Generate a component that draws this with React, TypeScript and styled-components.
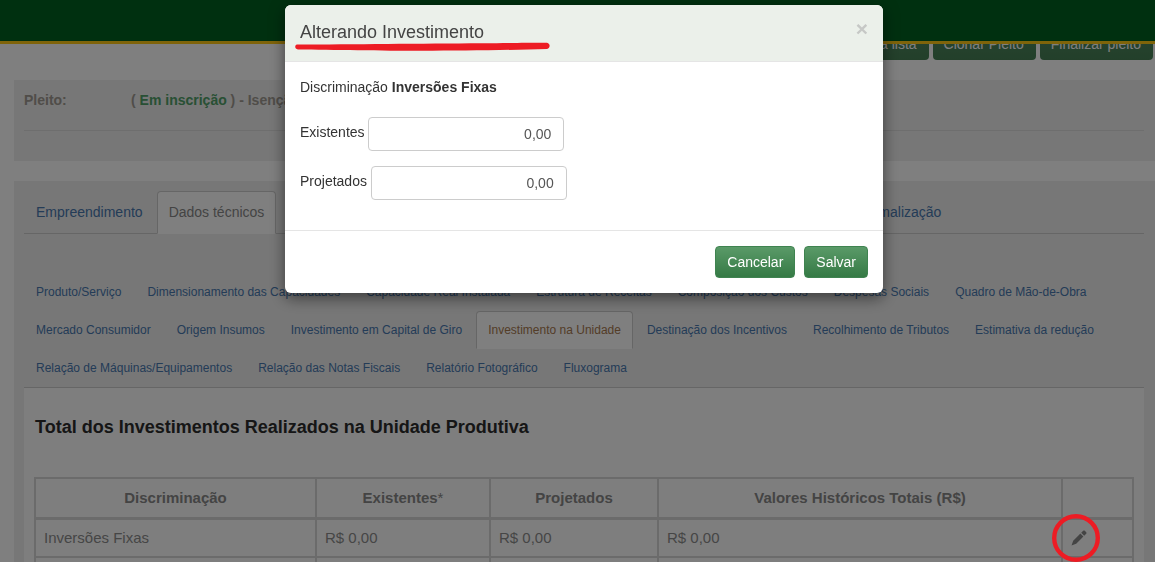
import React from 'react'
import styled, { createGlobalStyle } from 'styled-components'

const GlobalStyle = createGlobalStyle`
  html, body {
    margin: 0;
    height: 100%;
    overflow: hidden;
    background: #fff;
  }
  body {
    font-family: "Liberation Sans", Arial, sans-serif;
    font-size: 14px;
    line-height: 20px;
    color: #999;
  }
  * {
    box-sizing: border-box;
  }
`

const TopBar = styled.header`
  position: fixed;
  top: 0;
  left: 0;
  right: 0;
  height: 44px;
  background: #006020;
  border-bottom: 3px solid #ffc814;
  z-index: 5;
`

const Page = styled.main`
  padding: 26px 0 0 14px;
`

const Toolbar = styled.div`
  display: flex;
  justify-content: flex-end;
  gap: 4px;
  padding-right: 2px;
`

const ToolButton = styled.button`
  height: 34px;
  padding: 2px 12px 0 11px;
  border: 0;
  border-radius: 4px;
  background: linear-gradient(#508a60, #467f55);
  color: #fff;
  font: 14px "Liberation Sans", Arial, sans-serif;
`

const Panel = styled.section<{ $top: number }>`
  margin-top: ${(p) => p.$top}px;
  padding: 10px 11px 10px 10px;
  background: #eee;
`

const PleitoRow = styled.div`
  display: flex;
  font-weight: 700;
  color: #a09a92;
`

const PleitoLabel = styled.span`
  width: 107px;
`

const Status = styled.span`
  color: #50a068;
`

const Rule = styled.hr`
  margin: 20px 0;
  border: 0;
  border-top: 1px solid #ddd;
`

const MainTabs = styled.ul`
  display: flex;
  height: 43px;
  margin: 0;
  padding: 0;
  list-style: none;
  border-bottom: 1px solid #ccc;
`

const MainTab = styled.li<{ $active?: boolean; $left?: number }>`
  height: ${(p) => (p.$active ? 43 : 42)}px;
  margin-right: 2px;
  margin-left: ${(p) => p.$left ?? 0}px;
  padding: 10px 11px;
  border: 1px solid ${(p) => (p.$active ? '#ccc' : 'transparent')};
  border-bottom-color: ${(p) => (p.$active ? '#fff' : 'transparent')};
  border-radius: 4px 4px 0 0;
  background: ${(p) => (p.$active ? '#fff' : 'transparent')};
  color: ${(p) => (p.$active ? '#888' : '#4878ae')};
`

const SubTabs = styled.ul`
  display: flex;
  flex-wrap: wrap;
  margin: 39px 0 0;
  padding: 0;
  list-style: none;
  border-bottom: 1px solid #ccc;
`

const SubTab = styled.li<{ $active?: boolean }>`
  height: 38px;
  margin-right: 2px;
  padding: 8px 11px;
  border: 1px solid ${(p) => (p.$active ? '#ccc' : 'transparent')};
  border-bottom-color: ${(p) => (p.$active ? '#fff' : 'transparent')};
  border-radius: 4px 4px 0 0;
  background: ${(p) => (p.$active ? '#fff' : 'transparent')};
  color: ${(p) => (p.$active ? '#a87a50' : '#4878ae')};
  font-size: 12px;
`

const Content = styled.div`
  padding: 28px 10px 0;
  background: #fdfdfd;
`

const Heading = styled.h4`
  margin: 0 0 39px 1px;
  font-size: 18px;
  line-height: 22px;
  color: #2c2c2c;
`

const InvestTable = styled.table`
  width: 1098px;
  border-collapse: collapse;
  table-layout: fixed;
`

const HeadCell = styled.th`
  height: 40px;
  padding: 0 8px;
  border: 2px solid #d6d6d6;
  border-bottom-width: 3px;
  color: #888;
  font-size: 15px;
`

const Asterisk = styled.span`
  font-weight: 400;
`

const Cell = styled.td`
  height: 39px;
  padding: 1px 8px 0;
  border: 2px solid #d6d6d6;
  color: #8c8c8c;
  font-size: 15px;
`

const EditIcon = styled.svg`
  display: block;
  width: 16px;
  height: 16px;
  fill: #888;
`

const Backdrop = styled.div`
  position: fixed;
  inset: 0;
  background: rgba(0, 0, 0, 0.5);
  z-index: 10;
`

const Modal = styled.div`
  position: fixed;
  top: 5px;
  left: 285px;
  width: 598px;
  height: 288px;
  background: #fff;
  border-radius: 6px;
  box-shadow: 0 5px 15px rgba(0, 0, 0, 0.5);
  color: #333;
  z-index: 20;
`

const ModalHeader = styled.div`
  display: flex;
  justify-content: space-between;
  height: 57px;
  padding: 16px 15px 0;
  background: #ebf0ea;
  border-bottom: 1px solid #e5e5e5;
  border-radius: 6px 6px 0 0;
`

const ModalTitle = styled.h4`
  margin: 0;
  font-size: 18px;
  font-weight: 400;
  line-height: 22px;
  color: #444;
`

const CloseMark = styled.span`
  margin-top: -2px;
  font-size: 21px;
  font-weight: 700;
  color: #c6c8c6;
`

const ModalBody = styled.div`
  display: flex;
  flex-direction: column;
  gap: 15px;
  height: 168px;
  padding: 15px;
`

const Subject = styled.div`
  margin-bottom: 5px;
`

const Field = styled.label`
  display: flex;
  gap: 3.75px;
`

const FieldLabel = styled.span`
  margin-top: 5px;
`

const Amount = styled.input`
  width: 196px;
  height: 34px;
  padding: 0 12px;
  border: 1px solid #ccc;
  border-radius: 4px;
  color: #555;
  font: 14px "Liberation Sans", Arial, sans-serif;
  text-align: right;
`

const ModalFooter = styled.div`
  display: flex;
  justify-content: flex-end;
  gap: 9px;
  padding: 15px;
  border-top: 1px solid #e5e5e5;
`

const ModalButton = styled.button`
  height: 32px;
  padding: 0 11px;
  border: 1px solid #3f8350;
  border-radius: 4px;
  background: linear-gradient(#5a9a68, #357a45);
  color: #fff;
  font: 14px "Liberation Sans", Arial, sans-serif;
`

const Underline = styled.svg`
  position: fixed;
  top: 38px;
  left: 292px;
  width: 262px;
  height: 16px;
  z-index: 30;
`

const Circle = styled.svg`
  position: fixed;
  top: 513px;
  left: 1051px;
  width: 50px;
  height: 50px;
  z-index: 30;
`

const mainTabs = ['Empreendimento', 'Dados técnicos']

const subTabs = [
  'Produto/Serviço',
  'Dimensionamento das Capacidades',
  'Capacidade Real Instalada',
  'Estrutura de Receitas',
  'Composição dos Custos',
  'Despesas Sociais',
  'Quadro de Mão-de-Obra',
  'Mercado Consumidor',
  'Origem Insumos',
  'Investimento em Capital de Giro',
  'Investimento na Unidade',
  'Destinação dos Incentivos',
  'Recolhimento de Tributos',
  'Estimativa da redução',
  'Relação de Máquinas/Equipamentos',
  'Relação das Notas Fiscais',
  'Relatório Fotográfico',
  'Fluxograma',
]

const columnWidths = [281, 174, 168, 404, 71]

export default function App() {
  return (
    <>
      <GlobalStyle />
      <TopBar />
      <Page>
        <Toolbar>
          <ToolButton>Voltar a lista</ToolButton>
          <ToolButton>Clonar Pleito</ToolButton>
          <ToolButton>Finalizar pleito</ToolButton>
        </Toolbar>

        <Panel $top={20}>
          <PleitoRow>
            <PleitoLabel>Pleito:</PleitoLabel>
            <span>
              ( <Status>Em inscrição</Status> ) - Isenção
            </span>
          </PleitoRow>
          <Rule />
        </Panel>

        <Panel $top={20}>
          <MainTabs>
            {mainTabs.map((tab, index) => (
              <MainTab key={tab} $active={index === 1}>
                {tab}
              </MainTab>
            ))}
            <MainTab $left={567}>Formalização</MainTab>
          </MainTabs>

          <SubTabs>
            {subTabs.map((tab) => (
              <SubTab key={tab} $active={tab === 'Investimento na Unidade'}>
                {tab}
              </SubTab>
            ))}
          </SubTabs>

          <Content>
            <Heading>Total dos Investimentos Realizados na Unidade Produtiva</Heading>
            <InvestTable>
              <colgroup>
                {columnWidths.map((width) => (
                  <col key={width} style={{ width }} />
                ))}
              </colgroup>
              <thead>
                <tr>
                  <HeadCell>Discriminação</HeadCell>
                  <HeadCell>
                    Existentes<Asterisk>*</Asterisk>
                  </HeadCell>
                  <HeadCell>Projetados</HeadCell>
                  <HeadCell>Valores Históricos Totais (R$)</HeadCell>
                  <HeadCell />
                </tr>
              </thead>
              <tbody>
                <tr>
                  <Cell>Inversões Fixas</Cell>
                  <Cell>R$ 0,00</Cell>
                  <Cell>R$ 0,00</Cell>
                  <Cell>R$ 0,00</Cell>
                  <Cell>
                    <EditIcon viewBox="0 0 16 16">
                      <path d="M0.5 15.5 L2.2 10.8 L9.4 3.6 L12.4 6.6 L5.2 13.8 Z" />
                      <path d="M10.2 2.8 L12.2 0.8 C12.7 0.3 13.3 0.3 13.8 0.8 L15.2 2.2 C15.7 2.7 15.7 3.3 15.2 3.8 L13.2 5.8 Z" />
                    </EditIcon>
                  </Cell>
                </tr>
                <tr>
                  <Cell />
                  <Cell />
                  <Cell />
                  <Cell />
                  <Cell />
                </tr>
              </tbody>
            </InvestTable>
          </Content>
        </Panel>
      </Page>

      <Backdrop />

      <Modal>
        <ModalHeader>
          <ModalTitle>Alterando Investimento</ModalTitle>
          <CloseMark>×</CloseMark>
        </ModalHeader>
        <ModalBody>
          <Subject>
            Discriminação <b>Inversões Fixas</b>
          </Subject>
          <Field>
            <FieldLabel>Existentes</FieldLabel>
            <Amount readOnly value="0,00" />
          </Field>
          <Field>
            <FieldLabel>Projetados</FieldLabel>
            <Amount readOnly value="0,00" />
          </Field>
        </ModalBody>
        <ModalFooter>
          <ModalButton>Cancelar</ModalButton>
          <ModalButton>Salvar</ModalButton>
        </ModalFooter>
      </Modal>

      <Underline viewBox="0 0 262 16">
        <path
          d="M5 6.6 C60 6.2 130 5.6 190 5.2 C220 5 245 4.6 255 4.8 C258.5 5.5 258.5 10 255 11 C220 12 170 12.8 130 12.8 C90 12.8 40 12 6 11.5 C2.5 11 2.5 7.2 5 6.6 Z"
          fill="#ed1c24"
        />
      </Underline>
      <Circle viewBox="0 0 50 50">
        <circle cx="25" cy="25" r="21.8" fill="none" stroke="#ed1c24" strokeWidth="4.4" />
      </Circle>
    </>
  )
}
